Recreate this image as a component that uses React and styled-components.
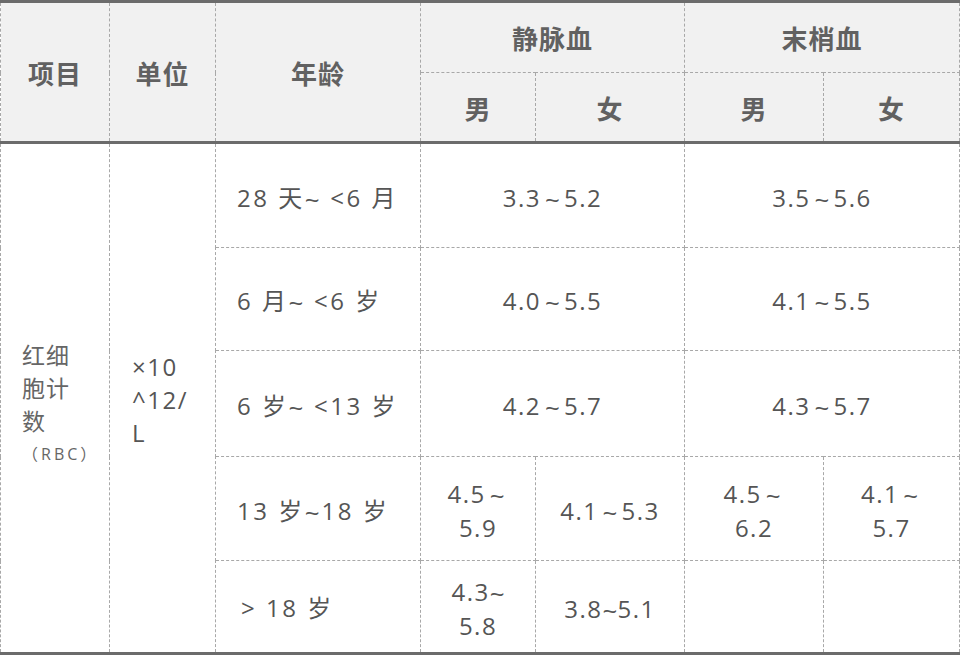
import React from "react";
import styled, { createGlobalStyle } from "styled-components";

const Global = createGlobalStyle`
  html, body { margin: 0; padding: 0; background: #fff; }
  body { font-family: "Open Sans", "Noto Sans CJK SC", sans-serif; }
`;

const Table = styled.table`
  width: 959px;
  border-collapse: collapse;
  table-layout: fixed;
  border-top: 3px solid #6b6b6b;
  border-bottom: 3px solid #6b6b6b;
  font-family: "Open Sans", "Noto Sans CJK SC", sans-serif;
`;

const Head = styled.thead`
  background: #f1f1f1;
  border-bottom: 3px solid #6b6b6b;
`;

const HeadRow = styled.tr`
  height: ${(p) => p.$h}px;
`;

const Th = styled.th`
  border: 1px dashed #a8a8a8;
  color: #616161;
  font-size: 26px;
  font-weight: 700;
  letter-spacing: 1px;
  text-align: center;
  vertical-align: middle;
  padding: 0;
  font-family: "Noto Sans CJK SC", sans-serif;
`;

const BodyRow = styled.tr`
  height: ${(p) => p.$h}px;
`;

const Td = styled.td`
  border: 1px dashed #a8a8a8;
  color: #555;
  font-size: 24px;
  letter-spacing: ${(p) => p.$ls ?? 1.5}px;
  line-height: 34px;
  vertical-align: middle;
  text-align: ${(p) => p.$align || "center"};
  padding: ${(p) => p.$padT ?? 3}px ${(p) => p.$padR ?? 16}px 0 ${(p) => p.$padL ?? 16}px;
`;

const ItemName = styled.div`
  font-size: 23px;
  line-height: 33px;
  letter-spacing: 1px;
  color: #666;
`;

const ItemCode = styled.div`
  font-size: 16px;
  line-height: 32px;
  letter-spacing: 3px;
  white-space: nowrap;
  color: #666;
`;

const Line = styled.div`
  white-space: nowrap;
  line-height: ${(p) => p.$lh ?? 34}px;
`;

const Tilde = styled.span`
  font-size: 26px;
  letter-spacing: 0;
  display: inline-block;
  margin: 0 ${(p) => p.$mr}px 0 ${(p) => p.$ml}px;
  transform: translateY(2px);
`;

const withTilde = (text, ml, mr) => {
  const parts = text.split("~");
  return parts.map((p, i) => (
    <React.Fragment key={i}>
      {p}
      {i < parts.length - 1 && (
        <Tilde $ml={ml} $mr={mr}>
          ~
        </Tilde>
      )}
    </React.Fragment>
  ));
};

const MultiLine = ({ lines, ml = 0, mr = 0, lh }) => (
  <>
    {lines.map((l, i) => (
      <Line key={i} $lh={lh}>
        {withTilde(l, ml, mr)}
      </Line>
    ))}
  </>
);

const rows = [
  { h: 105, age: "28 天~ <6 月", cells: [{ v: "3.3~5.2", span: 2 }, { v: "3.5~5.6", span: 2 }] },
  { h: 103, age: "6 月~ <6 岁", cells: [{ v: "4.0~5.5", span: 2 }, { v: "4.1~5.5", span: 2 }] },
  { h: 106, age: "6 岁~ <13 岁", cells: [{ v: "4.2~5.7", span: 2 }, { v: "4.3~5.7", span: 2 }] },
  {
    h: 104,
    age: "13 岁~18 岁",
    cells: [
      { v: ["4.5~", "5.9"] },
      { v: "4.1~5.3" },
      { v: ["4.5~", "6.2"] },
      { v: ["4.1~", "5.7"] },
    ],
  },
  {
    h: 93,
    age: "> 18 岁",
    ageIndent: 25,
    cells: [
      { v: ["4.3~", "5.8"], tight: true },
      { v: "3.8~5.1", tight: true },
      { v: "" },
      { v: "" },
    ],
  },
];

export default function App() {
  return (
    <>
      <Global />
      <Table>
        <colgroup>
          <col style={{ width: 109 }} />
          <col style={{ width: 106 }} />
          <col style={{ width: 205 }} />
          <col style={{ width: 115 }} />
          <col style={{ width: 149 }} />
          <col style={{ width: 139 }} />
          <col style={{ width: 136 }} />
        </colgroup>
        <Head>
          <HeadRow $h={71}>
            <Th rowSpan={2}>项目</Th>
            <Th rowSpan={2}>单位</Th>
            <Th rowSpan={2}>年龄</Th>
            <Th colSpan={2}>静脉血</Th>
            <Th colSpan={2}>末梢血</Th>
          </HeadRow>
          <HeadRow $h={70}>
            <Th>男</Th>
            <Th>女</Th>
            <Th>男</Th>
            <Th>女</Th>
          </HeadRow>
        </Head>
        <tbody>
          {rows.map((r, i) => (
            <BodyRow key={i} $h={r.h}>
              {i === 0 && (
                <>
                  <Td rowSpan={5} $align="left" $padL={21} $padR={18} $padT={12}>
                    <ItemName>红细胞计数</ItemName>
                    <ItemCode>（RBC）</ItemCode>
                  </Td>
                  <Td rowSpan={5} $align="left" $padL={22} $padR={8} $padT={2}>
                    <MultiLine lines={["×10", "^12/", "L"]} lh={33} />
                  </Td>
                </>
              )}
              <Td $align="left" $padL={r.ageIndent ?? 21} $padR={6} $ls={2.5}>
                {withTilde(r.age, 0, 2)}
              </Td>
              {r.cells.map((c, j) => {
                const m = c.tight ? 0 : 4;
                return (
                  <Td key={j} colSpan={c.span || 1}>
                    {Array.isArray(c.v) ? (
                      <MultiLine lines={c.v} ml={m} mr={m} />
                    ) : (
                      withTilde(c.v, m, m)
                    )}
                  </Td>
                );
              })}
            </BodyRow>
          ))}
        </tbody>
      </Table>
    </>
  );
}
